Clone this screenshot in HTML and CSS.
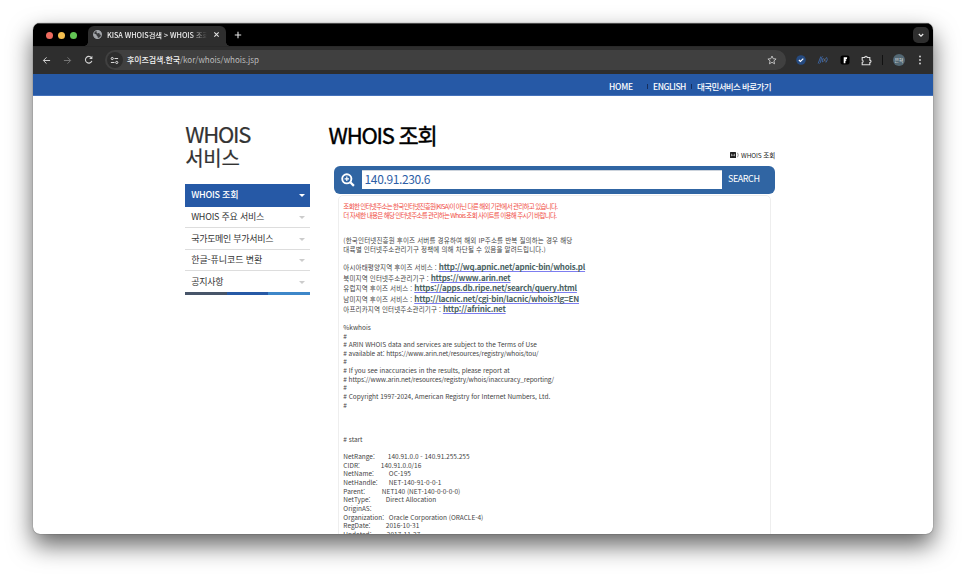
FILE: index.html
```html
<!DOCTYPE html>
<html lang="ko">
<head>
<meta charset="utf-8">
<title>KISA WHOIS검색 &gt; WHOIS 조회</title>
<link rel="stylesheet" href="styles.css">
</head>
<body>
<div class="window">
  <div class="tabstrip">
    <div class="lights"><i class="red"></i><i class="yellow"></i><i class="green"></i></div>
    <div class="tab">
      <svg class="globe" viewBox="0 0 16 16"><circle cx="8" cy="8" r="7" fill="#3b3c3e" stroke="#a4a7ab" stroke-width="1.8"/><path d="M2 6l4 2 1 3 2 1-1 3C4 15 1 12 1 8zM7 1l-1 3 2 2 3-1 1 3 3 1c1-4-2-8-6-8z" fill="#a4a7ab"/></svg>
      <span class="tab-title">KISA WHOIS검색 &gt; WHOIS 조회</span>
      <svg class="close" viewBox="0 0 8 8"><path d="M1.5 1.5l5 5M6.5 1.5l-5 5" stroke="#e6e6e6" stroke-width="1.2"/></svg>
    </div>
    <svg class="plus" viewBox="0 0 8 8"><path d="M4 .8v6.4M.8 4h6.4" stroke="#e6e6e6" stroke-width="1.1"/></svg>
    <div class="tab-search"><svg viewBox="0 0 8 8"><path d="M1.8 3L4 5.2 6.200 3" fill="none" stroke="#eee" stroke-width="1.2"/></svg></div>
  </div>
  <div class="toolbar">
    <svg class="nav" viewBox="0 0 10 10"><path d="M9 5H1.700M5 1.500L1.500 5 5 8.500" fill="none" stroke="#d2d2d2" stroke-width="1.1"/></svg>
    <svg class="nav" viewBox="0 0 10 10"><path d="M1 5h7.300M5 1.500L8.500 5 5 8.500" fill="none" stroke="#767676" stroke-width="1.100"/></svg>
    <svg class="nav reload" viewBox="0 0 10 10"><path d="M8.300 6.200A3.500 3.500 0 1 1 7.800 2.900" fill="none" stroke="#d2d2d2" stroke-width="1.200"/><path d="M8.800.9v3.400H5.400z" fill="#d2d2d2"/></svg>
    <div class="omnibox">
      <span class="site"><svg viewBox="0 0 10 10"><g fill="none" stroke="#ddd" stroke-width="1.100"><circle cx="2.500" cy="2.800" r="1.200"/><path d="M5 2.800h4M1 7.200h4"/><circle cx="7.500" cy="7.200" r="1.200"/></g></svg></span>
      <span class="url"><b>후이즈검색.한국</b><span>/kor/whois/whois.jsp</span></span>
      <svg class="star" viewBox="0 0 10 10"><path d="M5 1l1.200 2.700 2.900.3-2.200 1.900.7 2.900L5 7.300 2.400 8.800l.7-2.900L.9 4l2.900-.3z" fill="none" stroke="#c8c8c8" stroke-width=".9"/></svg>
    </div>
    <div class="extensions">
      <svg viewBox="0 0 10 10"><circle cx="5" cy="5" r="4.800" fill="#254a80"/><path d="M2.900 5l1.500 1.500 2.900-2.900" fill="none" stroke="#fff" stroke-width="1.200"/></svg>
      <svg class="wide" viewBox="0 0 12 10"><g fill="none" stroke="#3d64a0" stroke-width="1"><path d="M1.200 8.500L3.800 1.500M2.500 8.500q1 0 1.500-3.500T5.600 1.500"/><path d="M6.200 3.200Q4.900 5 5.500 7.200M9.500 2.200q2 2.400-.6 5.300"/></g><path d="M6.600 3.500l2 3M8.600 3.300l-2 3.400" stroke="#68707c" stroke-width=".8"/></svg>
      <svg viewBox="0 0 10 10"><rect x=".5" y=".5" width="9" height="9" rx="2" fill="#000"/><path d="M3.700 2.200h3.500L6.900 4H5.800v.8h1.100L5.400 6.300v1.900H3.700z" fill="#fff"/></svg>
      <svg class="puzzle" viewBox="0 0 11 11"><path d="M1.200 2.500h2.600a1.200 1.200 0 0 1 2.400 0h2.600v2.600a1.200 1.200 0 0 1 0 2.400v2.300H1.200V7.500a1.300 1.300 0 0 0 0-2.500z" fill="none" stroke="#ddd" stroke-width="1.100"/></svg>
      <i class="divider"></i>
      <span class="avatar">은혁</span>
      <svg class="dots" viewBox="0 0 4 10"><g fill="#ddd"><circle cx="2" cy="1.500" r=".9"/><circle cx="2" cy="5" r=".9"/><circle cx="2" cy="8.500" r=".9"/></g></svg>
    </div>
  </div>
  <div class="page">
    <nav class="topnav">
      <a class="home">HOME</a><a class="english">ENGLISH</a><a class="service">대국민서비스 바로가기</a>
    </nav>
    <div class="content">
      <aside>
        <h2><span>WHOIS</span><br>서비스</h2>
        <ul class="menu">
          <li class="active"><span class="m1">WHOIS 조회</span></li>
          <li><span class="m2">WHOIS 주요 서비스</span></li>
          <li><span class="m3">국가도메인 부가서비스</span></li>
          <li><span class="m4">한글-퓨니코드 변환</span></li>
          <li><span class="m5">공지사항</span></li>
        </ul>
        <div class="stripe"></div>
      </aside>
      <main>
        <h1>WHOIS 조회</h1>
        <div class="crumb"><svg viewBox="0 0 6 6"><rect width="6" height="6" rx=".5" fill="#222"/><path d="M1.500 1.800v2.400M4.500 1.800v2.400M1.500 3.200h3" stroke="#ddd" stroke-width=".6"/></svg><svg class="sep" viewBox="0 0 5 6"><path d="M1.500.8Q3 3 1.500 5.200" fill="none" stroke="#666" stroke-width=".7"/></svg><span>WHOIS 조회</span></div>
        <div class="search">
          <svg viewBox="0 0 14 14"><circle cx="5.800" cy="5.800" r="4.600" fill="none" stroke="#fff" stroke-width="1.900"/><path d="M9.300 9.300l3.600 3.600" stroke="#fff" stroke-width="2.300"/><path d="M5.800 3.600V8M3.600 5.800H8" stroke="#fff" stroke-width="1.200"/></svg>
          <div class="field">140.91.230.6</div>
          <span class="go">SEARCH</span>
        </div>
        <div class="result">
          <p class="notice">조회한 인터넷주소는 한국인터넷진흥원(KISA)이 아닌 다른 해외 기관에서 관리하고 있습니다.<br>더 자세한 내용은 해당 인터넷주소를 관리하는 Whois 조회 사이트를 이용해 주시기 바랍니다.</p>
          <p class="guide">(한국인터넷진흥원 후이즈 서버를 경유하여 해외 IP주소를 반복 질의하는 경우 해당<br>대륙별 인터넷주소관리기구 정책에 의해 차단될 수 있음을 알려드립니다.)</p>
          <ul class="links">
            <li>아시아태평양지역 후이즈 서비스 : <a>http://wq.apnic.net/apnic-bin/whois.pl</a></li>
            <li>북미지역 인터넷주소관리기구 : <a>https://www.arin.net</a></li>
            <li>유럽지역 후이즈 서비스 : <a>https://apps.db.ripe.net/search/query.html</a></li>
            <li>남미지역 후이즈 서비스 : <a>http://lacnic.net/cgi-bin/lacnic/whois?lg=EN</a></li>
            <li>아프리카지역 인터넷주소관리기구 : <a>http://afrinic.net</a></li>
          </ul>
<pre>%kwhois
#
# ARIN WHOIS data and services are subject to the Terms of Use
<span class="tight"># available at: https://www.arin.net/resources/registry/whois/tou/</span>
#
# If you see inaccuracies in the results, please report at
<span class="tight"># https://www.arin.net/resources/registry/whois/inaccuracy_reporting/</span>
#
# Copyright 1997-2024, American Registry for Internet Numbers, Ltd.
#



# start

</pre>
          <dl>
            <div><dt class="t44">NetRange:</dt><dd>140.91.0.0 - 140.91.255.255</dd></div>
            <div><dt class="t37">CIDR:</dt><dd>140.91.0.0/16</dd></div>
            <div><dt class="t45">NetName:</dt><dd>OC-195</dd></div>
            <div><dt class="t45">NetHandle:</dt><dd>NET-140-91-0-0-1</dd></div>
            <div><dt class="t38">Parent:</dt><dd>NET140 (NET-140-0-0-0-0)</dd></div>
            <div><dt class="t42">NetType:</dt><dd>Direct Allocation</dd></div>
            <div><dt>OriginAS:</dt></div>
            <div><dt class="t45">Organization:</dt><dd>Oracle Corporation (ORACLE-4)</dd></div>
            <div><dt class="t42">RegDate:</dt><dd>2016-10-31</dd></div>
            <div><dt class="t43">Updated:</dt><dd>2017-11-27</dd></div>
          </dl>
        </div>
      </main>
    </div>
  </div>
</div>
</body>
</html>
```
FILE: styles.css
```css
* { box-sizing: border-box; }
body, h1, h2, p, ul, pre, dl, dd { margin: 0; padding: 0; }
body { background: #fff; height: 578px; overflow: hidden; padding: 23px 33.500px 0 33.400px; font-family: "Noto Sans CJK KR", "Noto Sans", sans-serif; }
ul { list-style: none; }
i { font-style: normal; }
svg { display: block; flex: none; }

.window { height: 511px; border-radius: 7px; overflow: hidden; background: #fff; display: flex; flex-direction: column; box-shadow: 0 0 1px rgba(0,0,0,.75), 0 11px 24px rgba(0,0,0,.62); }

.tabstrip { height: 23px; flex: none; background: #000; border-top: 1px solid #4a4a4a; display: flex; align-items: center; padding: 0 3.500px 0 12.500px; }
.lights { display: flex; gap: 5px; }
.lights i { width: 7px; height: 7px; border-radius: 50%; }
.red { background: #ed6a5e; }
.yellow { background: #f5bf4f; }
.green { background: #62c554; }
.tab { margin-left: 11px; width: 138px; height: 20px; align-self: flex-end; background: #2e2e2e; border-radius: 6px 6px 0 0; display: flex; align-items: center; padding: 0 5px; position: relative; }
.tab::before, .tab::after { content: ""; position: absolute; bottom: 0; width: 5px; height: 5px; }
.tab::before { left: -5px; background: radial-gradient(circle at 0 0, transparent 5px, #2e2e2e 5.300px); }
.tab::after { right: -5px; background: radial-gradient(circle at 100% 0, transparent 5px, #2e2e2e 5.300px); }
.globe { width: 9px; height: 9px; }
.tab-title { margin-left: 5px; width: 100px; white-space: nowrap; overflow: hidden; font-size: 7.300px; line-height: 14px; font-weight: 500; letter-spacing: -.05px; color: #eee; -webkit-mask-image: linear-gradient(90deg, #000 84%, transparent); mask-image: linear-gradient(90deg, #000 84%, transparent); }
.globe, .tab-title, .close { margin-top: -3px; }
.close { width: 7px; height: 7px; margin-left: 5.700px; }
.plus { width: 8px; height: 8px; margin-left: 8px; }
.tab-search { margin-left: auto; width: 16px; height: 16px; border-radius: 5px; background: #2e2e2e; display: flex; align-items: center; justify-content: center; }
.tab-search svg { width: 8px; height: 8px; }

.toolbar { height: 28px; flex: none; background: #2e2e2e; border-top: 1px solid #292929; display: flex; align-items: center; padding: 0 0 1px 8.500px; }
.nav { width: 9px; height: 9px; margin-right: 12px; }
.nav.reload { width: 9.500px; height: 9.500px; margin-right: 11px; margin-left: .500px; }
.omnibox { width: 681px; height: 20px; border-radius: 10px; background: #404040; display: flex; align-items: center; padding: 0 9px 0 2px; }
.site { width: 16px; height: 16px; border-radius: 50%; background: #2d2d2d; display: flex; align-items: center; justify-content: center; }
.site svg { width: 9px; height: 9px; }
.url { margin-left: 4px; font-size: 8px; line-height: 14px; color: #bdbdbd; white-space: nowrap; }
.url b { font-weight: 500; color: #f2f2f2; letter-spacing: -.11px; }
.star { width: 10px; height: 10px; margin-left: auto; }
.extensions { flex: 1; display: flex; align-items: center; padding-left: 10.600px; }
.extensions svg { width: 10px; height: 10px; margin-right: 11px; }
.extensions .wide { width: 12px; margin-right: 10.300px; }
.extensions .puzzle { width: 11px; height: 11px; margin-right: 10px; }
.divider { width: 1.500px; height: 10px; background: #111; margin-right: 9.500px; }
.avatar { width: 12px; height: 12px; border-radius: 50%; background: #536874; color: #e4e4e4; font-size: 5px; line-height: 12px; text-align: center; letter-spacing: -.2px; }
.extensions .dots { width: 4px; margin: 0 0 0 13.500px; }

.page { flex: 1; min-height: 0; overflow: hidden; }
.topnav { height: 22px; background: #2659a6; border-bottom: 1px solid #4572bb; color: #fff; display: flex; align-items: center; padding-left: 575.600px; padding-top: 2px; font-size: 8.500px; font-weight: 500; line-height: 14px; white-space: nowrap; }
.topnav a + a { background: linear-gradient(#162e5c, #162e5c) 0 65% / 1px 5px no-repeat; }
.home { letter-spacing: -.22px; width: 38.500px; }
.english { letter-spacing: -.45px; padding-left: 5.500px; width: 44px; }
.service { letter-spacing: -.6px; padding-left: 5.500px; }

.content { display: flex; padding-left: 151.800px; }
aside { width: 125.200px; padding-top: 26px; }
h2 { font-size: 20px; line-height: 22.500px; height: 62px; font-weight: 400; color: #333; letter-spacing: -.23px; white-space: nowrap; -webkit-text-stroke: .2px #333; }
h2 span { font-size: 22px; letter-spacing: -1.244px; }
.menu li { height: 21.600px; border-bottom: 1px solid #ddd; display: flex; align-items: center; justify-content: space-between; padding: .6px 5px 0 6px; font-size: 9px; line-height: 14px; color: #333; white-space: nowrap; }
.menu li:last-child { border: 0; height: 21px; padding-top: 0; }
.menu li::after { content: ""; border: 3px solid transparent; border-top-color: #ccc; border-bottom: 0; margin-top: 1px; }
.menu .active { background: #2659a6; color: #fff; font-weight: 500; border-color: #2659a6; height: 22.500px; }
.menu .active::after { border-top-color: #fff; }
.m1 { letter-spacing: -.23px; }
.m2 { letter-spacing: -.215px; }
.m3 { letter-spacing: -.303px; }
.m4 { letter-spacing: -.091px; }
.m5 { letter-spacing: -.28px; }
.stripe { height: 2.500px; background: linear-gradient(90deg, #475569 33.300%, #2659a6 33.300% 66.600%, #3d87c9 66.600%); }

main { width: 446.500px; margin-left: 18.200px; padding-top: 21.500px; }
h1 { font-size: 22px; line-height: 32px; font-weight: 400; letter-spacing: -1.250px; color: #000; white-space: nowrap; -webkit-text-stroke: .4px #000; }
.crumb { height: 16px; padding-bottom: 5px; display: flex; justify-content: flex-end; align-items: center; font-size: 6.500px; line-height: 11px; letter-spacing: -.1px; color: #222; }
.crumb svg { width: 6px; height: 6px; }
.crumb .sep { width: 5px; }
.search { height: 28.500px; margin-left: 5.500px; margin-right: .5px; border-radius: 6px; background: #3065a3; display: flex; align-items: center; padding-left: 7px; }
.search svg { width: 14px; height: 14px; }
.field { margin-left: 7px; width: 360px; height: 19px; background: #fff; color: #2d5ea6; font-size: 12px; line-height: 16px; letter-spacing: -.375px; padding-left: 2.500px; border-top: 1px solid #ccd3dc; }
.go { margin-left: 6px; font-size: 9px; line-height: 14px; letter-spacing: -.45px; color: #fff; margin-top: -1px; }
.result { margin: 1px 3.700px 0 9.300px; padding: 6px 0 0 4.500px; border: 1px solid #eee; border-radius: 5px; height: 420px; font-size: 6.500px; line-height: 8.640px; color: #444; white-space: nowrap; }
.notice { color: #f04a3e; letter-spacing: -.703px; }
.guide { letter-spacing: .16px; margin-top: 17px; }
.links { margin-top: 8.900px; letter-spacing: .135px; line-height: 10.400px; }
.links li { height: 10.400px; }
.links a { font-size: 8px; font-weight: 700; letter-spacing: -.225px; color: #4a6262; text-decoration: underline; text-decoration-color: #7d7df0; text-decoration-thickness: 1px; text-underline-offset: 1px; text-decoration-skip-ink: none; }
pre { margin-top: 8.500px; font-family: inherit; letter-spacing: -.02px; }
.tight { letter-spacing: -.09px; }
dl { margin-top: -.4px; }
dl div { display: flex; height: 8.640px; }
.t37 { width: 37.500px; }
.t38 { width: 38.500px; }
.t42 { width: 42.500px; }
.t43 { width: 43.500px; }
.t44 { width: 44.500px; }
.t45 { width: 45.500px; }
```
